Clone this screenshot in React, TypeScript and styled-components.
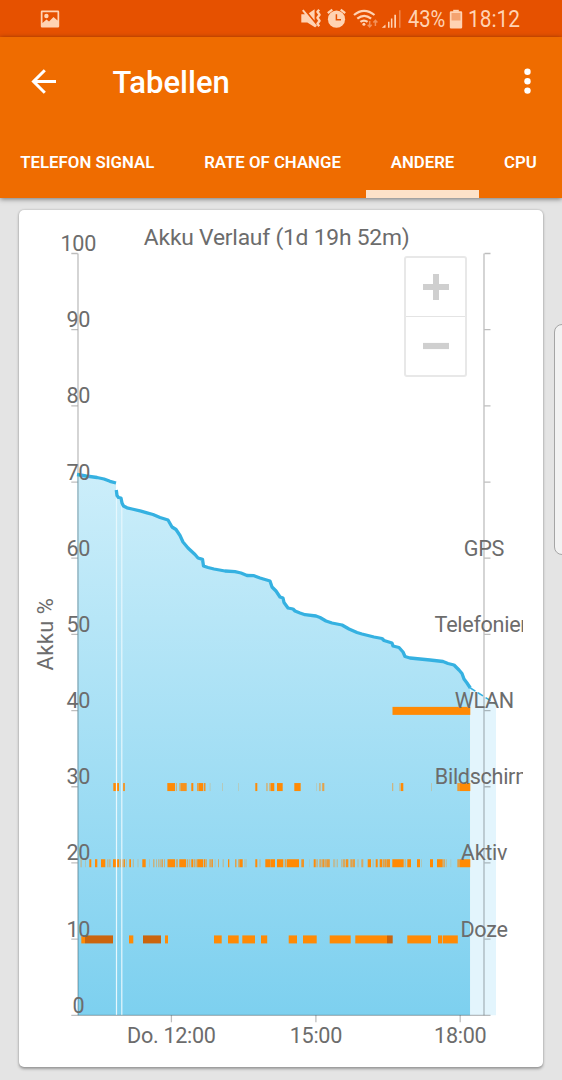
import React from "react";
import styled, { createGlobalStyle } from "styled-components";

const GlobalStyle = createGlobalStyle`
  * { box-sizing: border-box; }
  html, body { margin: 0; padding: 0; }
  body {
    background: #e4e4e4;
    font-family: Roboto, "Liberation Sans", sans-serif;
    overflow: hidden;
  }
`;

const Screen = styled.div`
  position: relative;
  width: 562px;
  height: 1080px;
  overflow: hidden;
  background: #e4e4e4;
`;

const StatusBar = styled.div`
  display: flex;
  align-items: center;
  height: 37px;
  padding: 0 42px 0 40px;
  background: #e65100;
  color: #ffd3b3;
`;

const StatusIcons = styled.svg`
  display: block;
  flex: none;
`;

const StatusSpacer = styled.div`
  flex: 1;
`;

const StatusText = styled.span<{ $width: number; $scale: number; $gap: number }>`
  display: block;
  flex: none;
  width: ${(p) => p.$width}px;
  margin-left: ${(p) => p.$gap}px;
  font-size: 23.5px;
  line-height: 37px;
  padding-top: 2px;
  white-space: nowrap;
  transform: scaleX(${(p) => p.$scale});
  transform-origin: 0 50%;
`;

const Header = styled.header`
  position: relative;
  height: 160.5px;
  background: #ef6c00;
  color: #fff;
  box-shadow: 0 1px 5px rgba(0, 0, 0, 0.5);
`;

const Toolbar = styled.div`
  display: flex;
  align-items: center;
  height: 89px;
  padding: 0 28px 0 30px;
`;

const Title = styled.h1`
  flex: 1;
  margin: 0 0 0 54.5px;
  padding-top: 2px;
  font-size: 31px;
  line-height: 40px;
  font-weight: 500;
`;

const Tabs = styled.nav`
  display: flex;
  height: 71.5px;
  margin-left: -4.5px;
  overflow: hidden;
`;

const Tab = styled.div<{ $width: number; $active?: boolean }>`
  flex: none;
  width: ${(p) => p.$width}px;
  height: 71.5px;
  padding-top: 24px;
  text-align: center;
  white-space: nowrap;
  font-size: 16.8px;
  line-height: 24px;
  font-weight: 600;
  border-bottom: 8px solid ${(p) => (p.$active ? "#fde2c9" : "transparent")};
`;

const Card = styled.section`
  position: relative;
  width: 524.4px;
  height: 857px;
  margin: 12.5px 0 0 19px;
  border-radius: 5px;
  background: #fff;
  box-shadow: 0 1.5px 3px rgba(0, 0, 0, 0.32), 0 0 2px rgba(0, 0, 0, 0.16);
`;

const Chart = styled.svg`
  display: block;
  text {
    fill: #6c6c6c;
    font-family: Roboto, "Liberation Sans", sans-serif;
    font-size: 21.6px;
    letter-spacing: -0.3px;
  }
  text.title { font-size: 22.8px; letter-spacing: -0.2px; }
  text.axis { font-size: 22px; letter-spacing: 0.4px; }
`;

const ZoomControls = styled.div`
  position: absolute;
  top: 45.5px;
  left: 385px;
  width: 63px;
  height: 121.5px;
  display: flex;
  flex-direction: column;
  border: 2px solid #e8e8e8;
  border-radius: 3px;
`;

const ZoomButton = styled.button`
  display: flex;
  flex: 1;
  align-items: center;
  justify-content: center;
  padding: 0;
  border: 0;
  background: transparent;
  & + & { border-top: 1.5px solid #e4e4e4; }
`;

const EdgeHandle = styled.div`
  position: absolute;
  left: 554px;
  top: 324px;
  width: 20px;
  height: 231px;
  border: 1px solid #a5a5a5;
  border-radius: 8px;
  background: #f2f2f2;
`;

/* start, end, opacity */
type Segment = [number, number, number?];

const TOP = 253.5;
const STEP = 76.18;
const BOTTOM = TOP + STEP * 10;
const levelY = (level: number) => BOTTOM - (level / 10) * STEP;

const LINE_A = "77,474.5 86,476 97,477.5 104,479 110,481.3 116,483";
const LINE_B =
  "116.3,490 117,495.5 118.5,497.5 121,498 122,503 123.5,506 127,507.8 132,509 141,511.2 147,512.8 153,514.5 160,517.5 168,520 172,527 176,529.5 180,535.5 183,542 188,548 195,554.5 198,558 202.5,559.3 203.5,566 208,567.5 214,569 225,571 235,571.7 241,573 247,575.5 254,575.7 260,578 270,581 272,587 276,591 280,597 283,598 284,602.5 288,608 293,609 295,611 300,613 305,614.7 316,616 320,617.5 326,621 332,623 342,625 349,629 357,632.5 362,634 374,637 382,638.5 384,640.5 392,643 393,646 399,647.5 403,652 405,656.5 410,658 430,660 443,661.5 448,663.5 454,665 459,670 462,673.5 464,679 467,683 470.3,688";

const WLAN: Segment[] = [[392.5, 470.3]];

const SCREEN_ON: Segment[] = [
  [113.3, 119], [123, 125, 0.8], [167.3, 175], [175.8, 177, 0.5], [179.3, 181, 0.6], [181, 186.7, 0.9],
  [191.3, 193.3], [197, 198.5, 0.7], [198.5, 203], [203.7, 205.5, 0.9], [209.7, 210.5, 0.3],
  [222, 222.8, 0.3], [238.3, 239, 0.3], [255.3, 257.3], [266.3, 267.6, 0.6], [269.3, 271, 0.6],
  [271, 274.3], [277, 282.7], [294.3, 300.7], [316.2, 317, 0.25], [319, 320.7, 0.45],
  [322.2, 324.3, 0.7], [392.2, 393.2, 0.6], [399, 400.3, 0.3], [400.7, 403.3], [431.2, 432, 0.35],
  [457.3, 459.3, 0.8], [459.3, 470.3],
];

const ACTIVE: Segment[] = [
  [80.6, 81.6, 0.5], [85.2, 86, 0.3], [89.3, 91.3], [95, 97.3], [101, 105.3], [107.3, 108.4, 0.5],
  [109, 110.7, 0.4], [113, 119], [119.5, 121, 0.5], [122, 123.5, 0.6], [123.7, 125, 0.9],
  [126, 127, 0.3], [129.3, 131], [132.7, 134, 0.35], [137.6, 138.4, 0.4], [142.3, 145.7],
  [149, 149.8, 0.3], [153, 154.5, 0.5], [156, 157, 0.4], [158, 159.3, 0.4], [159.8, 160.7, 0.5],
  [161.5, 162.8, 0.8], [164, 165, 0.5], [167.5, 175], [175.8, 178, 0.55], [179.3, 186],
  [186.7, 188, 0.6], [188.7, 190.3, 0.4], [191.3, 193.3], [194, 195.5, 0.6], [196.5, 198, 0.8],
  [198, 203], [203.7, 205.2], [205.6, 206.7, 0.8], [209.3, 211, 0.6], [211.3, 213, 0.8],
  [214.7, 215.5, 0.3], [218, 219, 0.6], [222.7, 223.7, 0.45], [228, 229.3], [235, 236.5, 0.7],
  [238.3, 239.5, 0.7], [239.5, 242.7], [244, 247, 0.2], [255.3, 257.3], [259.3, 260.7, 0.3],
  [265.3, 270], [270.3, 275], [277, 283.3], [284.7, 286.5, 0.7], [287, 299], [301.3, 304, 0.85],
  [309.2, 310, 0.2], [313.7, 315.7], [316.2, 318, 0.4], [319.3, 321.6, 0.6], [322.3, 324.5, 0.85],
  [325, 327, 0.6], [327, 329.8, 0.8], [333, 335.3, 0.35], [336.7, 337.7, 0.5], [341.3, 342.5, 0.5],
  [343, 345, 0.6], [345.7, 348.3, 0.9], [350.3, 352, 0.7], [352.3, 355, 0.75], [357, 359, 0.2],
  [361.3, 363.3, 0.6], [367.7, 371], [372.7, 373.5, 0.4], [375.7, 377.7], [379.7, 382],
  [382.5, 384, 0.7], [384.3, 386.7, 0.8], [387, 390, 0.9], [392.3, 403.7], [404.5, 406, 0.35],
  [407.3, 411], [417, 420], [421.2, 422, 0.3], [430, 433], [437, 442.7], [443.2, 445, 0.6],
  [445.7, 447, 0.3], [450.5, 451.2, 0.25], [457.3, 459, 0.7], [459.3, 470.3],
];

const DOZE: Segment[] = [
  [81.3, 85], [129, 133.3], [165, 168], [214, 221.7], [228, 238.7], [242.3, 255], [261, 267.2],
  [288.7, 297], [303, 316.7], [329.7, 350.7], [355.3, 387], [407.3, 431], [438, 442.3], [443, 457.8],
];
const DEEP_DOZE: Segment[] = [[85, 113], [143, 161], [387, 392.7]];

const Bars = ({ level, items, color = "#ff8a05" }: { level: number; items: Segment[]; color?: string }) => (
  <g fill={color}>
    {items.map(([from, to, opacity = 1]) => (
      <rect key={from} x={from} y={levelY(level) - 3.7} width={to - from} height={8} opacity={opacity} />
    ))}
  </g>
);

const LEVELS = [0, 10, 20, 30, 40, 50, 60, 70, 80, 90, 100];
const STATES: [string, number, number][] = [
  ["GPS", 60, 484],
  ["Telefonier", 50, 481],
  ["WLAN", 40, 484.3],
  ["Bildschirm", 30, 484.3],
  ["Aktiv", 20, 484],
  ["Doze", 10, 484],
];
const TIMES: [string, number][] = [
  ["Do. 12:00", 171.4],
  ["15:00", 315.9],
  ["18:00", 460.2],
];

const BatteryChart = () => (
  <Chart width={524} height={857} viewBox="19 210 524 857">
    <defs>
      <linearGradient id="fill" gradientUnits="userSpaceOnUse" x1="0" y1="474" x2="0" y2="1015">
        <stop offset="0" stopColor="#cceefa" />
        <stop offset="1" stopColor="#7dd0ef" />
      </linearGradient>
      <clipPath id="plot">
        <rect x="30" y="210" width="493" height="857" />
      </clipPath>
    </defs>

    <polygon fill="url(#fill)" points={`78,${BOTTOM} ${LINE_A} 116,${BOTTOM}`} />
    <polygon fill="url(#fill)" points={`116,${BOTTOM} ${LINE_B} 470.3,${BOTTOM}`} />
    <polygon fill="#e3f5fd" points={`470.3,${BOTTOM} 470.3,688 496,704 496,${BOTTOM}`} />

    <Bars level={40} items={WLAN} />
    <Bars level={30} items={SCREEN_ON} />
    <Bars level={20} items={ACTIVE} />
    <Bars level={10} items={DOZE} />
    <Bars level={10} items={DEEP_DOZE} color="#cb650e" />

    <g stroke="#e6f7fd" strokeWidth="1.2">
      <line x1="116.5" y1="499" x2="116.5" y2={BOTTOM} />
      <line x1="121.8" y1="506" x2="121.8" y2={BOTTOM} />
    </g>

    <g stroke="#000" strokeOpacity="0.26" strokeWidth="1.3" fill="none">
      <line x1="78" y1={TOP} x2="78" y2={BOTTOM} />
      <line x1="484" y1={TOP} x2="484" y2={BOTTOM} />
      <line x1="71.3" y1={BOTTOM} x2="490.5" y2={BOTTOM} />
      {LEVELS.slice(1).map((level) => (
        <path key={level} d={`M71.3 ${levelY(level)}H77.6M484.6 ${levelY(level)}H490.5`} />
      ))}
      {TIMES.map(([label, x]) => (
        <line key={label} x1={x} y1={BOTTOM} x2={x} y2={BOTTOM + 7} />
      ))}
    </g>

    <g fill="none" stroke="#35b1e1" strokeWidth="3.3" strokeLinejoin="round">
      <polyline points={LINE_A} />
      <polyline points={LINE_B} />
      <line x1="470.3" y1="688" x2="496" y2="704" strokeWidth="1.5" strokeDasharray="6 3" />
    </g>

    <g clipPath="url(#plot)" textAnchor="middle">
      <text className="title" x="276.7" y="245">Akku Verlauf (1d 19h 52m)</text>
      {LEVELS.map((level) => (
        <text key={level} x="78.3" y={levelY(level) - 2.45}>{level}</text>
      ))}
      {STATES.map(([label, level, x]) => (
        <text key={label} x={x} y={levelY(level) - 2.45}>{label}</text>
      ))}
      {TIMES.map(([label, x]) => (
        <text key={label} x={x} y="1043.4">{label}</text>
      ))}
      <text className="axis" transform="translate(53.3 634.2) rotate(-90)">Akku %</text>
    </g>
  </Chart>
);

export default function App() {
  return (
    <Screen>
      <GlobalStyle />
      <StatusBar>
        <StatusIcons width="20" height="18" viewBox="0 0 20 18" fill="currentColor">
          <path
            fillRule="evenodd"
            d="M2 0.5h16a1.2 1.2 0 0 1 1.2 1.2v14.6a1.2 1.2 0 0 1-1.2 1.2H2A1.2 1.2 0 0 1 .8 16.3V1.7A1.2 1.2 0 0 1 2 .5ZM2.5 2.2v10.8l4-3.6 2.5 2 4.5-4.5 4 3.6V2.2Z"
          />
          <circle cx="6.4" cy="6" r="2.2" />
        </StatusIcons>
        <StatusSpacer />
        <StatusIcons width="102" height="22" viewBox="300 8 102 22" fill="currentColor">
          <path d="M301.3 14.2h5.2l8.8 11v2.3l-8-5h-6ZM308.8 13.2l5.8-3.9v11.2ZM302 10.7l1.6-1.3L317 25.7l-1.5 1.3Z" />
          <path d="M319.2 9.8l-1.8 2 2.2 3-2.2 3 2.2 3-2.2 3 1.8 2.4" fill="none" stroke="currentColor" strokeWidth="2.3" strokeLinejoin="round" />
          <circle cx="336.5" cy="19.2" r="8.6" />
          <path d="M327.8 13.2l4.5-3.6M340.7 9.6l4.5 3.6" stroke="currentColor" strokeWidth="2.2" />
          <path d="M336.4 14.2v5.5h4.6" stroke="#e65100" strokeWidth="1.5" fill="none" />
          <g fill="none" stroke="currentColor" strokeWidth="2.2">
            <path d="M354 15q10-8.4 20.5 0M357.3 18.6q6.9-5.6 13.8 0M360.4 21.9q3.6-2.7 7.2 0" />
          </g>
          <circle cx="363.9" cy="24.3" r="1.5" />
          <g opacity="0.5" fill="none" stroke="currentColor" strokeWidth="1.5">
            <path d="M369.7 21v6M367.7 24.7l2 2.2 2-2.2M375.4 26v-5.5M373.4 22.5l2-2.2 2 2.2" />
          </g>
          <path d="M385.5 24.5v3.2h-3.7ZM388 21.7h1.5v6H388ZM390.9 18.5h1.5v9.2h-1.5ZM394.3 14.7h1.7v13h-1.7Z" />
          <path opacity="0.45" d="M399.1 10.3h1.4v17.4h-1.4Z" />
        </StatusIcons>
        <StatusText $width={41} $scale={0.855} $gap={6.5}>43%</StatusText>
        <StatusIcons width="14" height="20" viewBox="0 0 14 20" fill="currentColor">
          <path d="M4.2 .8h5.6v2H4.2Z" />
          <path d="M2 2.2h10a1.2 1.2 0 0 1 1.2 1.2v14.9a1.2 1.2 0 0 1-1.2 1.2H2a1.2 1.2 0 0 1-1.2-1.2V3.4A1.2 1.2 0 0 1 2 2.2Z" />
          <path d="M2.5 4h9v7.5h-9Z" fill="#f4a370" />
        </StatusIcons>
        <StatusText $width={52} $scale={0.89} $gap={5}>18:12</StatusText>
      </StatusBar>

      <Header>
        <Toolbar>
          <svg width="28" height="28" viewBox="0 0 28 28" fill="none" stroke="#fff" strokeWidth="3">
            <path d="M26 13.5H4M14.8 2.2L3.5 13.5L14.8 24.8" />
          </svg>
          <Title>Tabellen</Title>
          <svg width="12" height="28" viewBox="0 0 12 28" fill="#fff">
            <circle cx="5.5" cy="3.8" r="3.2" />
            <circle cx="5.5" cy="13.2" r="3.2" />
            <circle cx="5.5" cy="22.6" r="3.2" />
          </svg>
        </Toolbar>
        <Tabs>
          <Tab $width={183.5}>TELEFON SIGNAL</Tab>
          <Tab $width={187}>RATE OF CHANGE</Tab>
          <Tab $width={113} $active>ANDERE</Tab>
          <Tab $width={83}>CPU</Tab>
        </Tabs>
      </Header>

      <Card>
        <BatteryChart />
        <ZoomControls>
          <ZoomButton aria-label="Vergrößern">
            <svg width="28" height="28" viewBox="0 0 28 28" fill="#cfcfcf">
              <path d="M1 10.9h10V1h6v9.9h10v6.2H17V27h-6v-9.9H1Z" />
            </svg>
          </ZoomButton>
          <ZoomButton aria-label="Verkleinern">
            <svg width="28" height="28" viewBox="0 0 28 28" fill="#cfcfcf">
              <path d="M1 10.9h26v6.2H1Z" />
            </svg>
          </ZoomButton>
        </ZoomControls>
      </Card>
      <EdgeHandle />
    </Screen>
  );
}
